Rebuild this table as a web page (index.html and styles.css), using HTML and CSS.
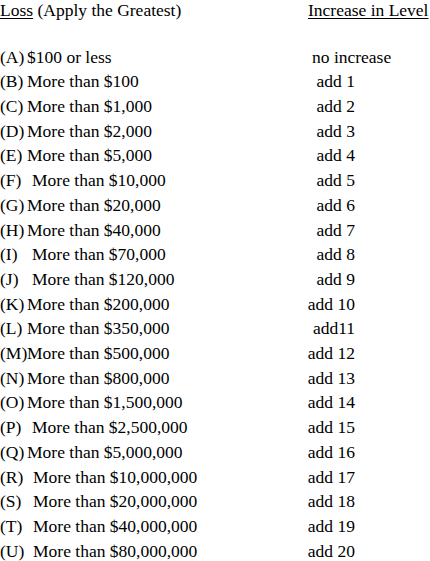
FILE: index.html
```html
<!DOCTYPE html>
<html>
<head>
<meta charset="utf-8">
<link rel="stylesheet" href="styles.css">
</head>
<body>
<div class="table">
  <div class="head">
    <div class="hloss"><span class="u">Loss</span> (Apply the Greatest)</div>
    <div class="hinc"><span class="u">Increase in Level</span></div>
  </div>
  <div class="row"><div class="loss"><span class="lab">(A)</span><span>$100 or less</span></div><div class="inc first">no increase</div></div>
  <div class="row"><div class="loss"><span class="lab">(B)</span><span>More than $100</span></div><div class="inc">add 1</div></div>
  <div class="row"><div class="loss"><span class="lab">(C)</span><span>More than $1,000</span></div><div class="inc">add 2</div></div>
  <div class="row"><div class="loss"><span class="lab">(D)</span><span>More than $2,000</span></div><div class="inc">add 3</div></div>
  <div class="row"><div class="loss"><span class="lab">(E)</span><span>More than $5,000</span></div><div class="inc">add 4</div></div>
  <div class="row"><div class="loss"><span class="lab">(F)</span><span class="i1">More than $10,000</span></div><div class="inc">add 5</div></div>
  <div class="row"><div class="loss"><span class="lab">(G)</span><span>More than $20,000</span></div><div class="inc">add 6</div></div>
  <div class="row"><div class="loss"><span class="lab">(H)</span><span>More than $40,000</span></div><div class="inc">add 7</div></div>
  <div class="row"><div class="loss"><span class="lab">(I)</span><span class="i1">More than $70,000</span></div><div class="inc">add 8</div></div>
  <div class="row"><div class="loss"><span class="lab">(J)</span><span class="i1">More than $120,000</span></div><div class="inc">add 9</div></div>
  <div class="row"><div class="loss"><span class="lab">(K)</span><span>More than $200,000</span></div><div class="inc">add 10</div></div>
  <div class="row"><div class="loss"><span class="lab">(L)</span><span>More than $350,000</span></div><div class="inc">add11</div></div>
  <div class="row"><div class="loss"><span class="lab">(M)</span><span>More than $500,000</span></div><div class="inc">add 12</div></div>
  <div class="row"><div class="loss"><span class="lab">(N)</span><span>More than $800,000</span></div><div class="inc">add 13</div></div>
  <div class="row"><div class="loss"><span class="lab">(O)</span><span>More than $1,500,000</span></div><div class="inc">add 14</div></div>
  <div class="row"><div class="loss"><span class="lab">(P)</span><span class="i1">More than $2,500,000</span></div><div class="inc">add 15</div></div>
  <div class="row"><div class="loss"><span class="lab">(Q)</span><span>More than $5,000,000</span></div><div class="inc">add 16</div></div>
  <div class="row"><div class="loss"><span class="lab">(R)</span><span class="i2">More than $10,000,000</span></div><div class="inc">add 17</div></div>
  <div class="row"><div class="loss"><span class="lab">(S)</span><span class="i2">More than $20,000,000</span></div><div class="inc">add 18</div></div>
  <div class="row"><div class="loss"><span class="lab">(T)</span><span class="i2">More than $40,000,000</span></div><div class="inc">add 19</div></div>
  <div class="row"><div class="loss"><span class="lab">(U)</span><span class="i2">More than $80,000,000</span></div><div class="inc">add 20</div></div>
</div>
</body>
</html>
```
FILE: styles.css
```css
html, body {
  margin: 0;
  padding: 0;
  background: #fff;
}
body {
  font-family: "Liberation Serif", "Times New Roman", serif;
  font-size: 17.5px;
  color: #000;
}
.table {
  display: flex;
  flex-direction: column;
}
.head {
  display: flex;
  line-height: normal;
  margin-bottom: 23.6px;
  white-space: nowrap;
}
.hloss {
  width: 308px;
  flex: none;
}
.hinc {
  flex: 1;
}
.u {
  text-decoration: underline;
  text-decoration-thickness: 1px;
  text-underline-offset: 2px;
}
.row {
  display: flex;
  line-height: 24.7px;
  white-space: nowrap;
}
.loss {
  width: 300px;
  flex: none;
  display: flex;
}
.lab {
  width: 27px;
  flex: none;
}
.i1 {
  padding-left: 5px;
}
.i2 {
  padding-left: 6px;
}
.inc {
  width: 55px;
  text-align: right;
}
.inc.first {
  text-align: left;
  padding-left: 12px;
  width: auto;
}
```
